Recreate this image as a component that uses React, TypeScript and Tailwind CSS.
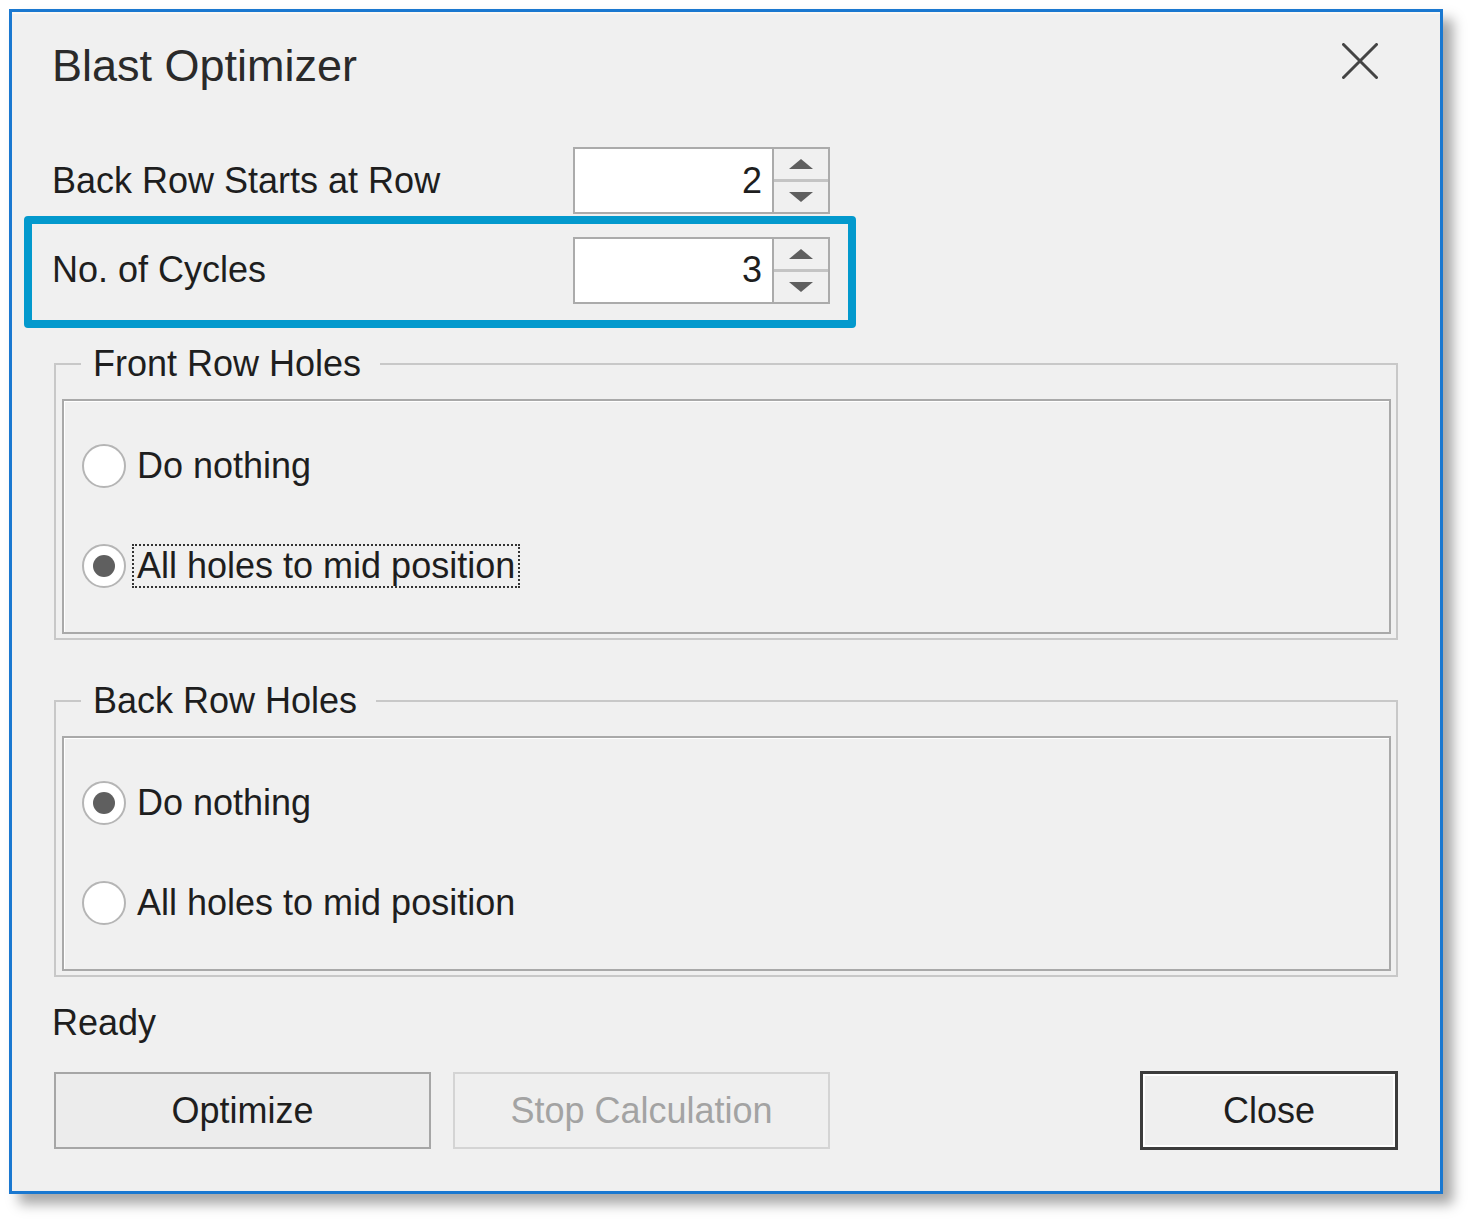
import React from 'react'

const font = { fontFamily: '"Liberation Sans", Arial, sans-serif' }

function Spinner({ value }: { value: string }) {
  return (
    <div className="flex w-[257px] h-[67px] border-2 border-[#ababab] bg-white">
      <div className="w-[197px] flex items-center justify-end pr-[10px] text-[36px] leading-none text-[#1e1e1e]">
        {value}
      </div>
      <div className="flex-1 flex flex-col gap-[3px] border-l-2 border-[#ababab] bg-[#c4c4c4]">
        <div className="flex-1 flex items-center justify-center bg-[#f0f0f0]">
          <svg width="24" height="10" viewBox="0 0 24 10">
            <polygon points="12,0 24,10 0,10" fill="#5f5f5f" />
          </svg>
        </div>
        <div className="flex-1 flex items-center justify-center bg-[#f0f0f0]">
          <svg width="24" height="10" viewBox="0 0 24 10">
            <polygon points="0,0 24,0 12,10" fill="#5f5f5f" />
          </svg>
        </div>
      </div>
    </div>
  )
}

function Radio({ label, checked, focused }: { label: string; checked?: boolean; focused?: boolean }) {
  return (
    <div className="flex items-center h-[46px]">
      <div className="w-[44px] h-[44px] rounded-full border-2 border-[#b5b5b5] bg-white flex items-center justify-center">
        {checked && <div className="w-[22px] h-[22px] rounded-full bg-[#5f5f5f]" />}
      </div>
      <span
        className={
          'ml-[6px] px-[3px] border-2 border-dotted leading-[40px] text-[36px] text-[#1e1e1e] ' +
          (focused ? 'border-[#333]' : 'border-transparent')
        }
      >
        {label}
      </span>
    </div>
  )
}

function Group({ title, options, className }: { title: string; options: { label: string; checked?: boolean; focused?: boolean }[]; className?: string }) {
  return (
    <fieldset className={'ml-[42px] w-[1344px] border-2 border-[#c8c8c8] ' + (className ?? '')}>
      <legend className="ml-[25px] pl-[12px] pr-[19px] text-[36px] leading-[44px] text-[#1e1e1e]">{title}</legend>
      <div className="mt-[13px] ml-[6px] mr-[5px] mb-[4px] h-[235px] border-2 border-[#a9a9a9] shadow-[inset_1px_1px_0_#fff]">
        <div className="flex flex-col gap-[54px] pt-[42px] pl-[18px]">
          {options.map((o) => (
            <Radio key={o.label} {...o} />
          ))}
        </div>
      </div>
    </fieldset>
  )
}

export default function App() {
  return (
    <main className="min-h-screen bg-white pl-[9px] pt-[9px]" style={font}>
      <div className="w-[1434px] h-[1185px] border-[3px] border-[#1a78d0] bg-[#f0f0f0] shadow-[inset_0_2px_0_#faf7f3,10px_10px_12px_rgba(0,0,0,0.35)]">
        {/* Title */}
        <div className="flex items-center justify-between h-[108px] pl-[40px] pr-[62px]">
          <h1 className="text-[45px] leading-none text-[#2a2a2a] -mt-[2px]">Blast Optimizer</h1>
          <svg width="36" height="36" viewBox="0 0 36 36" className="mb-[10px]">
            <path d="M1.5 1.5 L34.5 34.5 M34.5 1.5 L1.5 34.5" stroke="#444" strokeWidth="3" strokeLinecap="round" />
          </svg>
        </div>

        {/* Settings */}
        <div className="flex items-center mt-[27px] ml-[40px]">
          <span className="w-[521px] text-[36px] text-[#1e1e1e]">Back Row Starts at Row</span>
          <Spinner value="2" />
        </div>
        <div className="flex items-center mt-[2px] ml-[12px] w-[832px] h-[112px] border-[8px] border-[#0399cd] rounded-[4px] pl-[20px] pb-[4px]">
          <span className="w-[521px] text-[36px] text-[#1e1e1e]">No. of Cycles</span>
          <Spinner value="3" />
        </div>

        {/* Groups */}
        <Group
          className="mt-[14px]"
          title="Front Row Holes"
          options={[{ label: 'Do nothing' }, { label: 'All holes to mid position', checked: true, focused: true }]}
        />
        <Group
          className="mt-[39px]"
          title="Back Row Holes"
          options={[{ label: 'Do nothing', checked: true }, { label: 'All holes to mid position' }]}
        />

        <div className="ml-[40px] mt-[24px] text-[36px] leading-[44px] text-[#1e1e1e]">Ready</div>

        {/* Buttons */}
        <div className="flex items-center justify-between mt-[26px] ml-[42px] w-[1344px]">
          <div className="flex gap-[22px]">
            <button className="w-[377px] h-[77px] border-2 border-[#a6a6a6] bg-[#ececec] text-[36px] text-[#1e1e1e]">Optimize</button>
            <button className="w-[377px] h-[77px] border-2 border-[#d4d4d4] bg-[#efefef] text-[36px] text-[#a3a3a3]">Stop Calculation</button>
          </div>
          <button className="w-[258px] h-[79px] border-[3px] border-[#3c3c3c] bg-[#efefef] shadow-[inset_0_0_0_2px_#fff] text-[36px] text-[#1e1e1e]">Close</button>
        </div>
      </div>
    </main>
  )
}
